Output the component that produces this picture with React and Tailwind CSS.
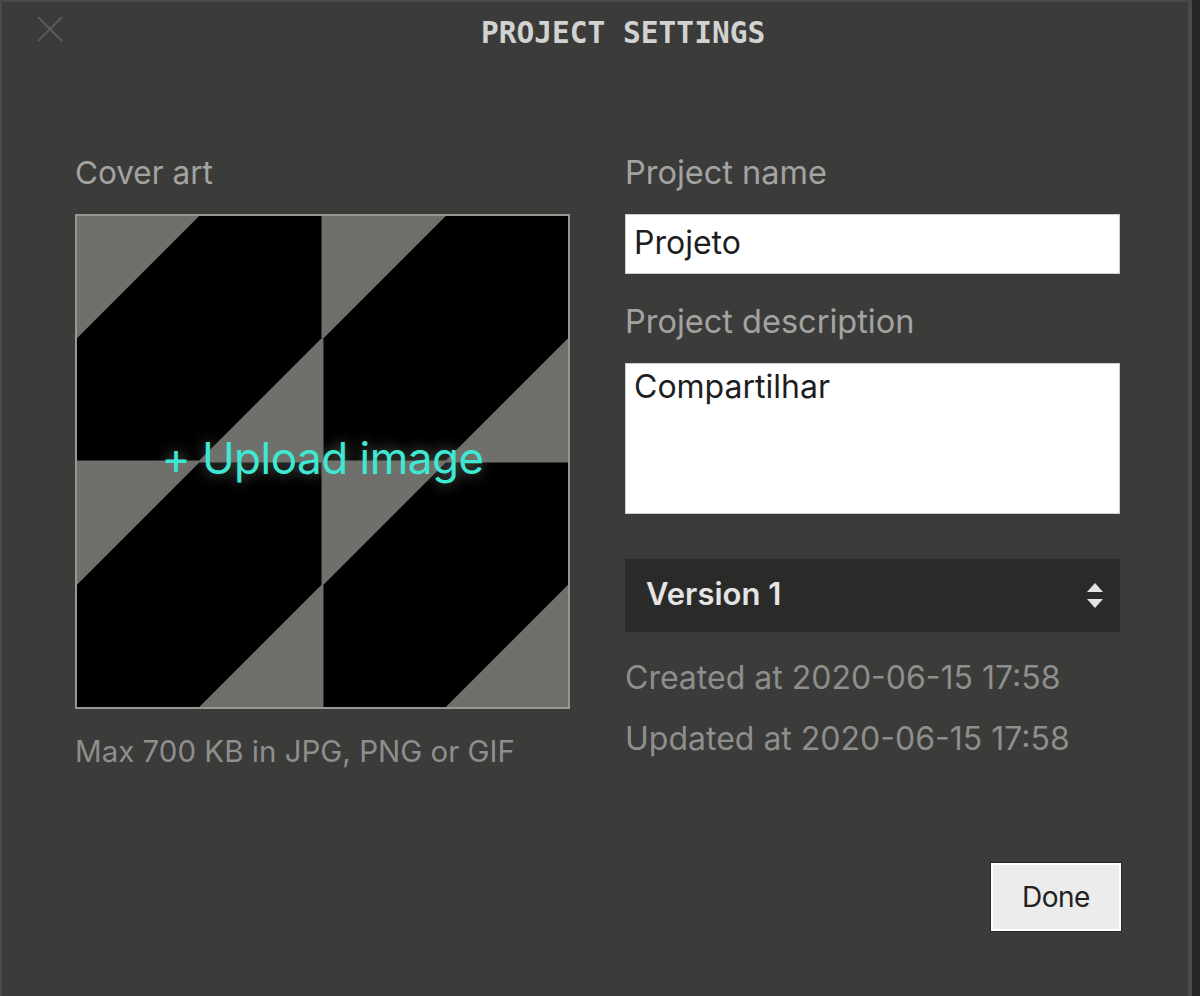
import React from 'react'

const body = { fontFamily: 'Inter, "Noto Sans", sans-serif' }
const mono = { fontFamily: '"DejaVu Sans Mono", "Liberation Mono", monospace' }

function CoverArt() {
  // four identical tiles: grey square with a black hexagon (two corners cut)
  const s = 244.5
  const h = s / 2
  const tiles = [
    [0, 0],
    [s + 2, 0],
    [0, s + 2],
    [s + 2, s + 2],
  ]
  return (
    <svg width="491" height="491" viewBox="0 0 491 491" className="block">
      <rect width="491" height="491" fill="#6f6f6b" />
      {tiles.map(([x, y], i) => (
        <polygon
          key={i}
          fill="#000"
          points={`${x + h},${y} ${x + s},${y} ${x + s},${y + h} ${x + h},${y + s} ${x},${y + s} ${x},${y + h}`}
        />
      ))}
    </svg>
  )
}

function UpDown() {
  return (
    <svg width="18" height="26" viewBox="0 0 18 26" className="block">
      <polygon points="9,0 17,9 1,9" fill="#e4e4e4" />
      <polygon points="1,16 17,16 9,25" fill="#e4e4e4" />
    </svg>
  )
}

export default function App() {
  return (
    <div className="w-[1200px] h-[996px] bg-[#272727] overflow-hidden" style={body}>
      <div className="w-[1192px] h-[1010px] bg-[#3b3b3a] border-2 border-r-4 border-[#4a4a49]">
        {/* header */}
        <div className="h-[62px] flex items-center pl-[35px]">
          <button className="w-[26px] h-[26px] -mt-[8px] flex items-center justify-center">
            <svg width="26" height="26" viewBox="0 0 26 26">
              <path d="M1 1 L25 25 M25 1 L1 25" stroke="#5a5a59" strokeWidth="2" />
            </svg>
          </button>
          <h1
            className="ml-[418px] text-[29.5px] leading-[36px] font-bold text-[#d2d2d1] tracking-normal"
            style={mono}
          >
            PROJECT SETTINGS
          </h1>
        </div>

        {/* body */}
        <div className="flex gap-[55px] pl-[73px] pt-[89px]">
          {/* left column */}
          <div className="w-[495px] flex flex-col">
            <label className="text-[31.5px] leading-[40px] text-[#a3a3a1]">Cover art</label>
            <div className="relative mt-[21px] w-[495px] h-[495px] border-2 border-[#969693]">
              <CoverArt />
              <div className="absolute inset-0 flex items-center justify-center">
                <span className="text-[44px] leading-[52px] text-[#3ee8d3] tracking-[-0.5px] -mt-[8px] [text-shadow:0_0_14px_rgba(120,120,115,0.95)]">
                  + Upload image
                </span>
              </div>
            </div>
            <p className="mt-[24px] text-[29.5px] leading-[36px] text-[#8e8e8c]">
              Max 700 KB in JPG, PNG or GIF
            </p>
          </div>

          {/* right column */}
          <div className="w-[495px] flex flex-col">
            <label className="text-[32.5px] leading-[40px] text-[#a3a3a1]">Project name</label>
            <div className="mt-[21px] h-[60px] bg-white border border-[#cdcdcd] flex items-center pl-[8px] pb-[3px] text-[32px] text-[#1e1e1e]">
              Projeto
            </div>
            <label className="mt-[28px] text-[32.5px] leading-[40px] text-[#a3a3a1]">Project description</label>
            <div className="mt-[21px] h-[151px] bg-white border border-[#cdcdcd] pl-[8px] pt-[4px] text-[32px] leading-[38px] text-[#1e1e1e]">
              Compartilhar
            </div>
            <div className="mt-[45px] h-[73px] bg-[#2a2a29] flex items-center justify-between pl-[21px] pr-[16px]">
              <span className="text-[31px] font-semibold text-[#e4e4e4] -mt-[2px]">Version 1</span>
              <UpDown />
            </div>
            <p className="mt-[28px] text-[32px] leading-[36px] text-[#8e8e8c]">
              Created at 2020-06-15 17:58
            </p>
            <p className="mt-[25px] text-[32px] leading-[36px] text-[#8e8e8c]">
              Updated at 2020-06-15 17:58
            </p>
          </div>
        </div>

        {/* footer */}
        <div className="flex justify-end pr-[67px] mt-[94px]">
          <button className="w-[130px] h-[68px] bg-[#ececec] border-2 border-white shadow-[0_0_0_1px_#2a2a2a] text-[28px] text-[#222] tracking-[-0.5px]">
            Done
          </button>
        </div>
      </div>
    </div>
  )
}
